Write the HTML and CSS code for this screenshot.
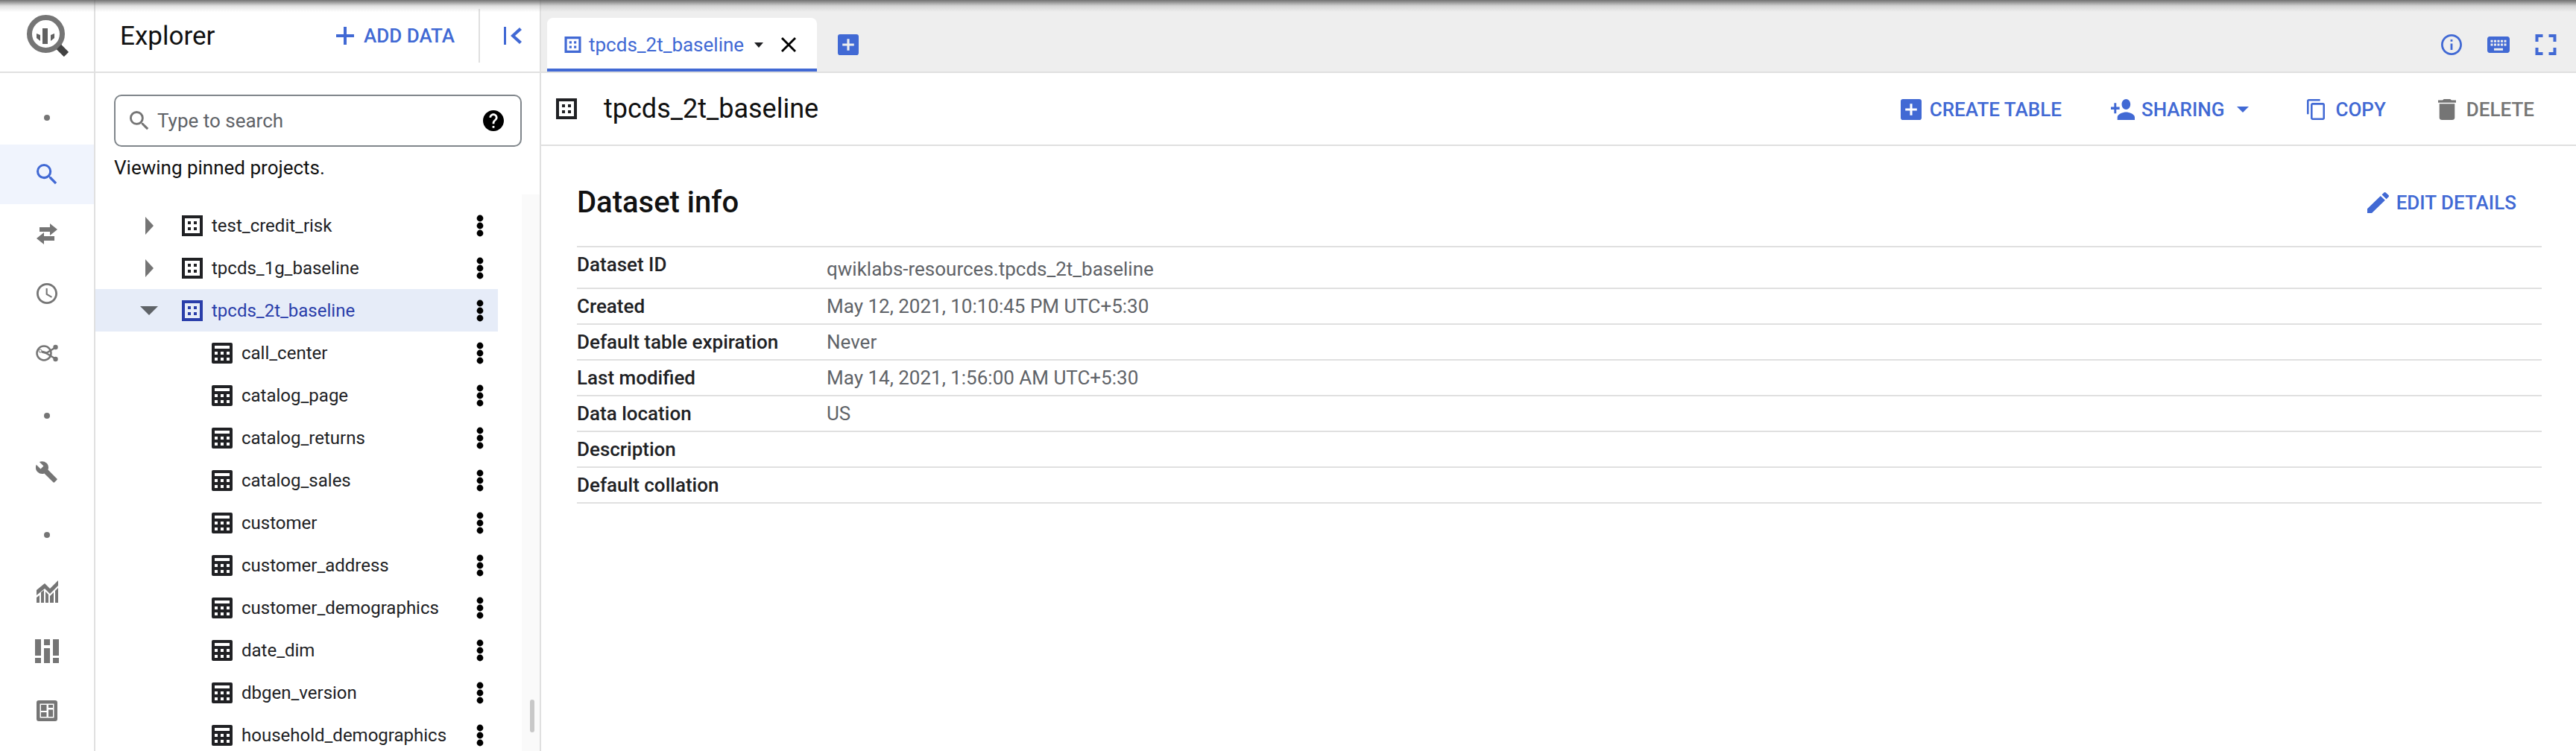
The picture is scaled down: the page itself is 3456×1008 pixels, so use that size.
FILE: index.html
```html
<!DOCTYPE html>
<html lang="en">
<head>
  <meta charset="UTF-8">
  <title>BigQuery Explorer</title>
  <link rel="stylesheet" href="styles.css">
</head>
<body>

  <svg class="defs" aria-hidden="true">
    <symbol id="i-dataset" viewBox="0 0 28 28">
      <path fill-rule="evenodd" d="M0 0h28v28H0zM4 4v20h20V4z"/>
      <path d="M8 8h4v4H8zM16 8h4v4h-4zM8 16h4v4H8zM16 16h4v4h-4z"/>
    </symbol>
    <symbol id="i-table" viewBox="0 0 28 28">
      <path fill-rule="evenodd" d="M2 0h24a2 2 0 0 1 2 2v24a2 2 0 0 1-2 2H2a2 2 0 0 1-2-2V2a2 2 0 0 1 2-2zM4 4v4h20V4zM4 12v4h4v-4zM12 12v4h4v-4zM20 12v4h4v-4zM4 20v4h4v-4zM12 20v4h4v-4zM20 20v4h4v-4z"/>
    </symbol>
    <symbol id="i-more" viewBox="0 0 10 30">
      <circle cx="5" cy="5" r="4.4"/><circle cx="5" cy="15" r="4.4"/><circle cx="5" cy="25" r="4.4"/>
    </symbol>
  </svg>

  <div class="top-shadow"></div>

  <div class="app">
    <nav class="rail">
      <div class="rail-logo">
        <svg width="56" height="56" viewBox="0 0 56 56">
          <circle cx="25.5" cy="25.5" r="22" fill="none" stroke="#757575" stroke-width="7"/>
          <path d="M43 43l10 10" fill="none" stroke="#424242" stroke-width="9"/>
          <path d="M13 25l5 2v8l-5-4zM21 18h7v21h-7zM32 27l5-2v6l-5 4z" fill="#616161"/>
        </svg>
      </div>
      <div class="rail-items">
        <div class="rail-item"><svg class="rail-dot" width="10" height="28" viewBox="0 0 10 28"><circle cx="5" cy="18" r="4"/></svg></div>
        <div class="rail-item active"><svg width="28" height="28" viewBox="3 3 18 18"><path d="M15.5 14h-.79l-.28-.27A6.471 6.471 0 0 0 16 9.5 6.5 6.5 0 1 0 9.5 16c1.61 0 3.09-.59 4.23-1.57l.27.28v.79l5 4.99L20.49 19l-4.99-5zm-6 0C7.01 14 5 11.99 5 9.5S7.01 5 9.5 5 14 7.01 14 9.5 11.99 14 9.5 14z"/></svg></div>
        <div class="rail-item"><svg width="28" height="28" viewBox="0 0 28 28"><path d="M4 5h14V0l10 8-10 8v-5H4zM24 17H10v-5L0 20l10 8v-5h14z"/></svg></div>
        <div class="rail-item"><svg width="28" height="28" viewBox="2 2 20 20"><path d="M11.99 2C6.47 2 2 6.48 2 12s4.47 10 9.99 10C17.52 22 22 17.52 22 12S17.52 2 11.99 2zM12 20c-4.42 0-8-3.58-8-8s3.58-8 8-8 8 3.58 8 8-3.58 8-8 8zm.5-13H11v6l5.25 3.15.75-1.23-4.5-2.67z"/></svg></div>
        <div class="rail-item"><svg width="30" height="24" viewBox="0 0 30 24">
          <circle cx="11" cy="12" r="9.5" fill="none" stroke="#757575" stroke-width="2.5"/>
          <circle cx="6" cy="9" r="2" fill="none" stroke="#757575"/>
          <path d="M8 10l7 2" fill="none" stroke="#757575" stroke-width="3"/>
          <path d="M14 12l13-8M14 12l13 8" fill="none" stroke="#757575" stroke-width="2.5"/>
          <circle cx="26.5" cy="4" r="3.2"/><circle cx="26.5" cy="20" r="3.2"/>
        </svg></div>
        <div class="rail-item"><svg class="rail-dot" width="10" height="28" viewBox="0 0 10 28"><circle cx="5" cy="18" r="4"/></svg></div>
        <div class="rail-item"><svg width="30" height="30" viewBox="1 1 23 23"><path d="M22.7 19l-9.1-9.1c.9-2.3.4-5-1.5-6.9-2-2-5-2.4-7.4-1.3L9 6 6 9 1.6 4.7C.4 7.1.9 10.1 2.9 12.1c1.9 1.9 4.6 2.4 6.9 1.5l9.1 9.1c.4.4 1 .4 1.4 0l2.3-2.3c.5-.4.5-1.1.1-1.4z"/></svg></div>
        <div class="rail-item"><svg class="rail-dot" width="10" height="28" viewBox="0 0 10 28"><circle cx="5" cy="18" r="4"/></svg></div>
        <div class="rail-item"><svg width="29" height="30" viewBox="0 0 29 30">
          <path d="M0 13L11 4l7 7L29 0v7L18 18l-7-7-11 9z"/>
          <path d="M0 23l4-3v10H0zM6 16l4-3v17H6zM12 15l4 4v11h-4zM18 21l5-5v14h-5zM25 14l4-4v20h-4z"/>
        </svg></div>
        <div class="rail-item"><svg width="32" height="32" viewBox="0 0 32 32"><path d="M0 0h8v22H0zM12 0h8v8h-8zM24 0h8v22h-8zM12 12h8v20h-8zM0 25h8v7H0zM24 25h8v7h-8z"/></svg></div>
        <div class="rail-item"><svg width="28" height="28" viewBox="0 0 28 28"><path fill-rule="evenodd" d="M3 0h22a3 3 0 0 1 3 3v22a3 3 0 0 1-3 3H3a3 3 0 0 1-3-3V3a3 3 0 0 1 3-3zM4.5 4.5v19h19v-19z"/><path d="M6 6h7.5v8H6zM16 6h6v4h-6zM6 16h7.5v6H6zM16 12.5h6V22h-6z"/></svg></div>
      </div>
    </nav>

    <aside class="sidebar">
      <header class="side-head">
        <span class="side-title">Explorer</span>
        <button class="btn add-data">
          <svg width="24" height="24" viewBox="0 0 24 24"><path d="M0 10h10V0h4v10h10v4H14v10h-4V14H0z"/></svg>
          ADD DATA
        </button>
        <span class="side-divider"></span>
        <svg class="collapse" width="24" height="24" viewBox="0 0 24 24"><path d="M0 0h3v24H0zM21 1l3 3-9 8 9 8-3 3-12-11z"/></svg>
      </header>

      <div class="search-box">
        <svg width="26" height="26" viewBox="3 3 18 18"><path d="M15.5 14h-.79l-.28-.27A6.471 6.471 0 0 0 16 9.5 6.5 6.5 0 1 0 9.5 16c1.61 0 3.09-.59 4.23-1.57l.27.28v.79l5 4.99L20.49 19l-4.99-5zm-6 0C7.01 14 5 11.99 5 9.5S7.01 5 9.5 5 14 7.01 14 9.5 11.99 14 9.5 14z"/></svg>
        <span class="search-text">Type to search</span>
        <svg class="help" width="28" height="28" viewBox="2 2 20 20"><path d="M12 2C6.48 2 2 6.48 2 12s4.48 10 10 10 10-4.48 10-10S17.52 2 12 2zm1 17h-2v-2h2v2zm2.07-7.75l-.9.92C13.45 12.9 13 13.5 13 15h-2v-.5c0-1.1.45-2.1 1.17-2.83l1.24-1.26c.37-.36.59-.86.59-1.41 0-1.1-.9-2-2-2s-2 .9-2 2H8c0-2.21 1.79-4 4-4s4 1.79 4 4c0 .88-.36 1.68-.93 2.25z"/></svg>
      </div>
      <p class="pinned-note">Viewing pinned projects.</p>

      <div class="tree-wrap">
        <div class="tree" id="tree">
          <div class="row dataset">
            <svg class="arrow" width="24" height="24" viewBox="0 0 24 24"><path d="M7 0l11 12L7 24z"/></svg>
            <svg class="obj" width="28" height="28"><use href="#i-dataset"/></svg>
            <span>test_credit_risk</span>
            <svg class="more" width="10" height="30"><use href="#i-more"/></svg>
          </div>
          <div class="row dataset">
            <svg class="arrow" width="24" height="24" viewBox="0 0 24 24"><path d="M7 0l11 12L7 24z"/></svg>
            <svg class="obj" width="28" height="28"><use href="#i-dataset"/></svg>
            <span>tpcds_1g_baseline</span>
            <svg class="more" width="10" height="30"><use href="#i-more"/></svg>
          </div>
          <div class="row dataset selected">
            <svg class="arrow" width="24" height="24" viewBox="0 0 24 24"><path d="M0 6h24L12 18z"/></svg>
            <svg class="obj" width="28" height="28"><use href="#i-dataset"/></svg>
            <span>tpcds_2t_baseline</span>
            <svg class="more" width="10" height="30"><use href="#i-more"/></svg>
          </div>
          <div class="row child"><svg class="obj" width="28" height="28"><use href="#i-table"/></svg><span>call_center</span><svg class="more" width="10" height="30"><use href="#i-more"/></svg></div>
          <div class="row child"><svg class="obj" width="28" height="28"><use href="#i-table"/></svg><span>catalog_page</span><svg class="more" width="10" height="30"><use href="#i-more"/></svg></div>
          <div class="row child"><svg class="obj" width="28" height="28"><use href="#i-table"/></svg><span>catalog_returns</span><svg class="more" width="10" height="30"><use href="#i-more"/></svg></div>
          <div class="row child"><svg class="obj" width="28" height="28"><use href="#i-table"/></svg><span>catalog_sales</span><svg class="more" width="10" height="30"><use href="#i-more"/></svg></div>
          <div class="row child"><svg class="obj" width="28" height="28"><use href="#i-table"/></svg><span>customer</span><svg class="more" width="10" height="30"><use href="#i-more"/></svg></div>
          <div class="row child"><svg class="obj" width="28" height="28"><use href="#i-table"/></svg><span>customer_address</span><svg class="more" width="10" height="30"><use href="#i-more"/></svg></div>
          <div class="row child"><svg class="obj" width="28" height="28"><use href="#i-table"/></svg><span>customer_demographics</span><svg class="more" width="10" height="30"><use href="#i-more"/></svg></div>
          <div class="row child"><svg class="obj" width="28" height="28"><use href="#i-table"/></svg><span>date_dim</span><svg class="more" width="10" height="30"><use href="#i-more"/></svg></div>
          <div class="row child"><svg class="obj" width="28" height="28"><use href="#i-table"/></svg><span>dbgen_version</span><svg class="more" width="10" height="30"><use href="#i-more"/></svg></div>
          <div class="row child"><svg class="obj" width="28" height="28"><use href="#i-table"/></svg><span>household_demographics</span><svg class="more" width="10" height="30"><use href="#i-more"/></svg></div>
        </div>
        <div class="scroll-track"><div class="scroll-thumb"></div></div>
      </div>
    </aside>

    <main class="main">
      <div class="tab-strip">
        <div class="tab">
          <svg width="23" height="22"><use href="#i-dataset"/></svg>
          <span class="tab-name">tpcds_2t_baseline</span>
          <svg class="tab-caret" width="12" height="7" viewBox="0 0 12 7"><path d="M0 0h12L6 7z"/></svg>
          <svg class="tab-close" width="20" height="20" viewBox="5 5 14 14"><path d="M19 6.41L17.59 5 12 10.59 6.41 5 5 6.41 10.59 12 5 17.59 6.41 19 12 13.41 17.59 19 19 17.59 13.41 12z"/></svg>
        </div>
        <svg class="tab-add" width="28" height="28" viewBox="3 3 18 18"><path d="M19 3H5a2 2 0 0 0-2 2v14a2 2 0 0 0 2 2h14a2 2 0 0 0 2-2V5a2 2 0 0 0-2-2zm-2 10h-4v4h-2v-4H7v-2h4V7h2v4h4v2z"/></svg>
        <div class="strip-tools">
          <svg width="28" height="28" viewBox="2 2 20 20"><path d="M11 7h2v2h-2zm0 4h2v6h-2zm1-9C6.48 2 2 6.48 2 12s4.48 10 10 10 10-4.48 10-10S17.52 2 12 2zm0 18c-4.41 0-8-3.59-8-8s3.59-8 8-8 8 3.59 8 8-3.59 8-8 8z"/></svg>
          <svg width="30" height="22" viewBox="2 5 20 14" preserveAspectRatio="none"><path d="M20 5H4c-1.1 0-1.99.9-1.99 2L2 17c0 1.1.9 2 2 2h16c1.1 0 2-.9 2-2V7c0-1.1-.9-2-2-2zm-9 3h2v2h-2V8zm0 3h2v2h-2v-2zM8 8h2v2H8V8zm0 3h2v2H8v-2zm-1 2H5v-2h2v2zm0-3H5V8h2v2zm9 7H8v-2h8v2zm0-4h-2v-2h2v2zm0-3h-2V8h2v2zm3 3h-2v-2h2v2zm0-3h-2V8h2v2z"/></svg>
          <svg width="29" height="28" viewBox="5 5 14 14"><path d="M7 14H5v5h5v-2H7v-3zm-2-4h2V7h3V5H5v5zm12 7h-3v2h5v-5h-2v3zM14 5v2h3v3h2V5h-5z"/></svg>
        </div>
      </div>

      <div class="toolbar">
        <svg class="toolbar-icon" width="28" height="28"><use href="#i-dataset"/></svg>
        <h1 class="toolbar-title">tpcds_2t_baseline</h1>
        <div class="actions">
          <button class="btn create">
            <svg width="28" height="28" viewBox="3 3 18 18"><path d="M19 3H5a2 2 0 0 0-2 2v14a2 2 0 0 0 2 2h14a2 2 0 0 0 2-2V5a2 2 0 0 0-2-2zm-2 10h-4v4h-2v-4H7v-2h4V7h2v4h4v2z"/></svg>
            CREATE TABLE
          </button>
          <button class="btn sharing">
            <svg width="32" height="28" viewBox="1 4 22 16" preserveAspectRatio="none"><path d="M15 12c2.21 0 4-1.79 4-4s-1.79-4-4-4-4 1.79-4 4 1.79 4 4 4zm-9-2V7H4v3H1v2h3v3h2v-3h3v-2H6zm9 4c-2.67 0-8 1.34-8 4v2h16v-2c0-2.66-5.33-4-8-4z"/></svg>
            SHARING
            <svg class="caret" width="16" height="8" viewBox="0 0 16 8"><path d="M0 0h16L8 8z"/></svg>
          </button>
          <button class="btn copy">
            <svg width="24" height="28" viewBox="2 1 19 22" preserveAspectRatio="none"><path d="M16 1H4c-1.1 0-2 .9-2 2v14h2V3h12V1zm3 4H8c-1.1 0-2 .9-2 2v14c0 1.1.9 2 2 2h11c1.1 0 2-.9 2-2V7c0-1.1-.9-2-2-2zm0 16H8V7h11v14z"/></svg>
            COPY
          </button>
          <button class="btn delete">
            <svg width="24" height="28" viewBox="5 3 14 18" preserveAspectRatio="none"><path d="M6 19c0 1.1.9 2 2 2h8c1.1 0 2-.9 2-2V7H6v12zM19 4h-3.5l-1-1h-5l-1 1H5v2h14V4z"/></svg>
            DELETE
          </button>
        </div>
      </div>

      <section class="details">
        <div class="details-head">
          <h2>Dataset info</h2>
          <button class="btn edit">
            <svg width="29" height="28" viewBox="3 3 18 18" preserveAspectRatio="none"><path d="M3 17.25V21h3.75L17.81 9.94l-3.75-3.75L3 17.25zM20.71 7.04c.39-.39.39-1.02 0-1.41l-2.34-2.34c-.39-.39-1.02-.39-1.41 0l-1.83 1.83 3.75 3.75 1.83-1.83z"/></svg>
            EDIT DETAILS
          </button>
        </div>
        <div class="info-row first"><span class="info-label">Dataset ID</span><span class="info-value">qwiklabs-resources.tpcds_2t_baseline</span></div>
        <div class="info-row"><span class="info-label">Created</span><span class="info-value">May 12, 2021, 10:10:45 PM UTC+5:30</span></div>
        <div class="info-row"><span class="info-label">Default table expiration</span><span class="info-value">Never</span></div>
        <div class="info-row"><span class="info-label">Last modified</span><span class="info-value">May 14, 2021, 1:56:00 AM UTC+5:30</span></div>
        <div class="info-row"><span class="info-label">Data location</span><span class="info-value">US</span></div>
        <div class="info-row"><span class="info-label">Description</span></div>
        <div class="info-row"><span class="info-label">Default collation</span></div>
      </section>
    </main>
  </div>

</body>
</html>
```

FILE: styles.css
```css
* {
  box-sizing: border-box;
}
body {
  margin: 0;
  height: 1008px;
  overflow: hidden;
  background: #ffffff;
  color: #202124;
  font-family: Roboto, sans-serif;
}
.defs {
  position: absolute;
  width: 0;
  height: 0;
}
.top-shadow {
  position: absolute;
  top: 0;
  left: 0;
  right: 0;
  height: 16px;
  background: linear-gradient(to bottom, rgba(90, 90, 90, 0.85), rgba(130, 130, 130, 0.25) 50%, rgba(130, 130, 130, 0));
  z-index: 5;
}
.app {
  display: flex;
  height: 1008px;
}
button.btn {
  display: flex;
  align-items: center;
  padding: 0;
  border: 0;
  background: none;
  font-family: Roboto, sans-serif;
  font-size: 26px;
  font-weight: 500;
  color: #4169d4;
  fill: #4169d4;
  white-space: nowrap;
}

/* left rail */
.rail {
  width: 128px;
  flex: none;
  border-right: 2px solid #e0e0e0;
}
.rail-logo {
  height: 98px;
  padding: 20px 0 0 36px;
  border-bottom: 2px solid #e0e0e0;
}
.rail-items {
  padding-top: 16px;
}
.rail-item {
  height: 80px;
  display: flex;
  align-items: center;
  justify-content: center;
  fill: #757575;
}
.rail-item.active {
  background: #f0f4fd;
  fill: #4169d4;
}

/* explorer */
.sidebar {
  width: 598px;
  flex: none;
  display: flex;
  flex-direction: column;
  border-right: 2px solid #e0e0e0;
  min-height: 0;
}
.side-head {
  height: 98px;
  flex: none;
  display: flex;
  align-items: center;
  padding-left: 33px;
  border-bottom: 2px solid #e0e0e0;
}
.side-title {
  font-size: 35px;
  color: #111111;
}
button.add-data {
  margin-left: auto;
  gap: 13px;
}
.side-divider {
  width: 2px;
  height: 72px;
  margin-left: 32px;
  background: #e0e0e0;
}
.collapse {
  margin: 0 24px 0 32px;
  fill: #4169d4;
}
.search-box {
  flex: none;
  height: 70px;
  margin: 29px 24px 0 25px;
  padding: 0 22px 0 19px;
  display: flex;
  align-items: center;
  border: 2px solid #80868b;
  border-radius: 10px;
  fill: #757575;
}
.search-text {
  margin-left: 11px;
  font-size: 26px;
  color: #5f6368;
}
.help {
  margin-left: auto;
  fill: #000000;
}
.pinned-note {
  flex: none;
  margin: 11px 0 0 25px;
  font-size: 26px;
  line-height: 34px;
  color: #111111;
}
.tree-wrap {
  flex: 1;
  min-height: 0;
  margin-top: 19px;
  display: flex;
  overflow: hidden;
}
.tree {
  width: 540px;
  flex: none;
  padding-top: 13px;
}
.row {
  height: 57px;
  display: flex;
  align-items: center;
  font-size: 24px;
  color: #202124;
  fill: #202124;
}
.row.dataset {
  padding-left: 60px;
}
.row.child {
  padding-left: 156px;
}
.row .arrow {
  fill: #757575;
  margin-right: 32px;
}
.row .obj {
  margin-right: 12px;
}
.row .more {
  margin: 0 19px 0 auto;
  fill: #000000;
}
.row.selected {
  background: #e6ecf8;
  color: #2a3eaa;
}
.row.selected .obj {
  fill: #2a3eaa;
}
.row.selected .arrow {
  fill: #5f6368;
}
.scroll-track {
  width: 26px;
  margin-left: 32px;
  background: #fafafa;
  padding: 678px 0 0 11px;
}
.scroll-thumb {
  width: 6px;
  height: 44px;
  border-radius: 3px;
  background: #c8c8c8;
}

/* main area */
.main {
  flex: 1;
  min-width: 0;
}
.tab-strip {
  height: 98px;
  display: flex;
  align-items: center;
  padding: 0 26px 0 8px;
  background: #eeeeee;
  border-bottom: 2px solid #e0e0e0;
}
.tab {
  width: 362px;
  height: 72px;
  margin-top: 24px;
  display: flex;
  align-items: center;
  padding: 4px 0 0 23px;
  background: #ffffff;
  border-bottom: 4px solid #4169d4;
  border-radius: 8px 8px 0 0;
  fill: #4169d4;
}
.tab-name {
  margin-left: 10px;
  font-size: 26px;
  color: #4169d4;
}
.tab-caret {
  margin-left: 14px;
  fill: #202124;
}
.tab-close {
  margin-left: 24px;
  fill: #000000;
}
.tab-add {
  margin: 24px 0 0 28px;
  fill: #4169d4;
}
.strip-tools {
  margin: 24px 0 0 auto;
  display: flex;
  align-items: center;
  gap: 34px;
  fill: #4169d4;
}
.toolbar {
  height: 98px;
  display: flex;
  align-items: center;
  padding-left: 20px;
  border-bottom: 2px solid #e0e0e0;
  fill: #202124;
}
.toolbar-title {
  margin: 0 0 0 36px;
  font-size: 36px;
  font-weight: 400;
  color: #111111;
}
.actions {
  margin-left: auto;
  display: flex;
  align-items: center;
  padding: 2px 56px 0 0;
}
.create {
  gap: 11px;
}
.sharing {
  gap: 9px;
  margin-left: 66px;
}
.sharing .caret {
  margin-left: 8px;
}
.copy {
  gap: 14px;
  margin-left: 78px;
}
.delete {
  gap: 14px;
  margin-left: 70px;
}
button.delete {
  color: #757575;
  fill: #757575;
}
.details {
  padding: 0 46px 0 48px;
}
.details-head {
  height: 136px;
  display: flex;
  align-items: center;
  justify-content: space-between;
  padding: 17px 34px 0 0;
  border-bottom: 2px solid #e0e0e0;
}
.details-head h2 {
  margin: 0;
  font-size: 40px;
  font-weight: 500;
  color: #111111;
}
.edit {
  gap: 10px;
}
.info-row {
  height: 48px;
  display: flex;
  align-items: center;
  border-bottom: 2px solid #e0e0e0;
  font-size: 26px;
}
.info-row.first {
  height: 56px;
}
.info-label {
  width: 335px;
  flex: none;
  font-weight: 500;
  color: #202124;
}
.info-value {
  color: #5f6368;
}
.info-row.first .info-label {
  margin-top: -8px;
}
.info-row.first .info-value {
  margin-top: 4px;
}
```
